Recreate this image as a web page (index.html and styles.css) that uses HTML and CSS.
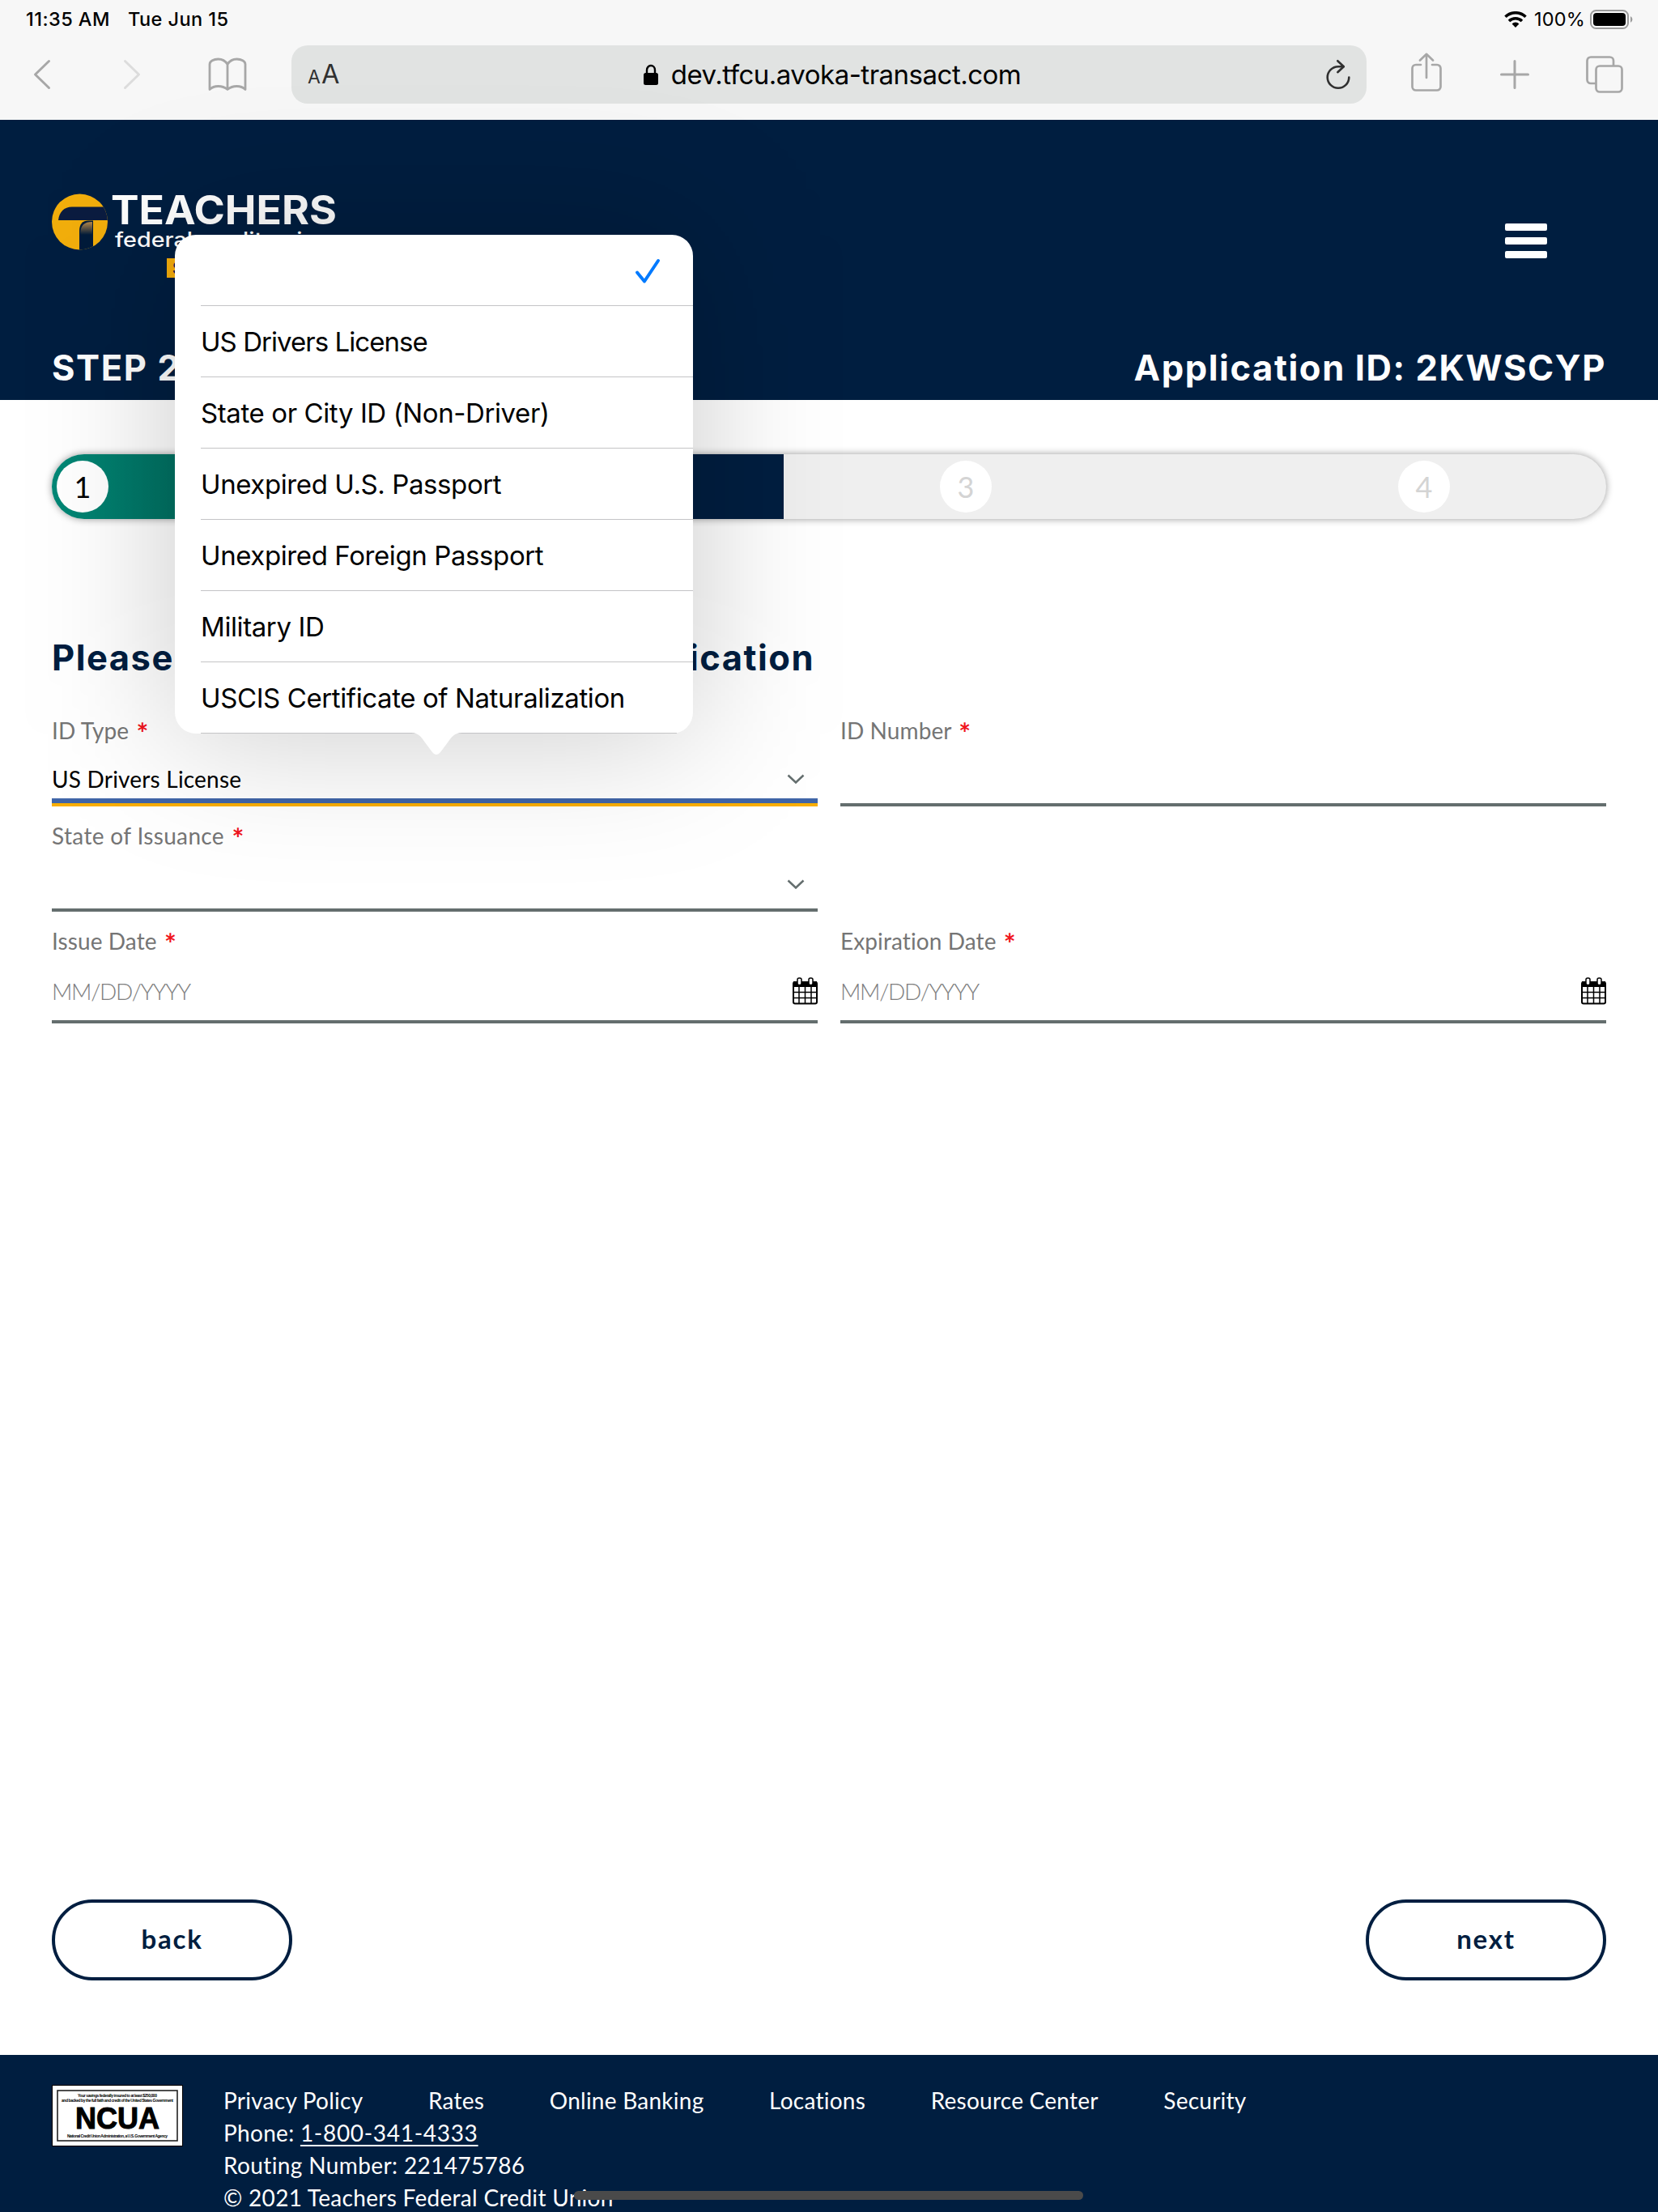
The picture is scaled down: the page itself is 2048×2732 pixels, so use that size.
FILE: index.html
```html
<!DOCTYPE html>
<html lang="en">
<head>
<meta charset="utf-8">
<title>Teachers Federal Credit Union - Application</title>
<link rel="stylesheet" href="styles.css">
</head>
<body>
<div class="browser">
  <div class="status">
    <div class="status-left"><span class="time">11:35 AM</span><span>Tue Jun 15</span></div>
    <div class="status-right">
      <svg class="wifi" width="28" height="20" viewBox="0 0 28 20" fill="none" stroke="#000" stroke-width="3.6"><path d="M1.5 6.8a18 18 0 0 1 25 0"/><path d="M6 12a11.5 11.5 0 0 1 16 0"/><path d="M14 20l-4.4-4.6a6.2 6.2 0 0 1 8.8 0z" fill="#000" stroke="none"/></svg>
      <span class="pct">100%</span>
      <svg width="54" height="24" viewBox="0 0 54 24"><rect x="1" y="1" width="46" height="22" rx="6.5" fill="none" stroke="#9b9b9b" stroke-width="2"/><rect x="4" y="4" width="40" height="16" rx="4" fill="#000"/><path d="M50 8a4.5 4.5 0 0 1 0 8z" fill="#9b9b9b"/></svg>
    </div>
  </div>
  <div class="toolbar">
    <svg class="ic-back" width="24" height="40" viewBox="0 0 24 40" fill="none" stroke="#a7a7a7" stroke-width="3" stroke-linecap="round" stroke-linejoin="round"><path d="M20.500 3.500L3.500 20l17 16.500"/></svg>
    <svg class="ic-fwd" width="24" height="40" viewBox="0 0 24 40" fill="none" stroke="#dcdcdc" stroke-width="3" stroke-linecap="round" stroke-linejoin="round"><path d="M3.500 3.500L20.500 20l-17 16.500"/></svg>
    <svg class="ic-book" width="48" height="42" viewBox="0 0 48 42" fill="none" stroke="#a7a7a7" stroke-width="2.800" stroke-linejoin="round"><path d="M24 8.500C21 3.500 16.500 2 12.500 2 7 2 2 4.500 2 8.500v31c3-3 6-4 10.500-4S21 37 24 39.500c3-2.500 7-4 11.500-4s7.500 1 10.500 4v-31C46 4.500 41 2 35.500 2 31.500 2 27 3.500 24 8.500zM24 8.500v31"/></svg>
    <div class="url">
      <span class="aa"><span class="aa-small">A</span>A</span>
      <div class="address">
        <svg width="18" height="26" viewBox="0 0 18 26"><path d="M4 12V7.500a5 5.500 0 0 1 10 0V12" fill="none" stroke="#000" stroke-width="2.400"/><rect y="11" width="18" height="15" rx="2.500"/></svg>
        <span>dev.tfcu.avoka-transact.com</span>
      </div>
      <svg class="ic-reload" width="30" height="38" viewBox="0 0 30 38" fill="none" stroke="#303030" stroke-width="2.600" stroke-linecap="round" stroke-linejoin="round"><path d="M28.300 22.500A13.300 13.300 0 1 1 15 9.200h6.500"/><path d="M14.300 2.200l7.500 7-7.500 7"/></svg>
    </div>
    <svg class="ic-share" width="38" height="48" viewBox="0 0 38 48" fill="none" stroke="#a7a7a7" stroke-width="2.700" stroke-linecap="round" stroke-linejoin="round"><path d="M12 15H6a4.500 4.500 0 0 0-4.500 4.500V42A4.500 4.500 0 0 0 6 46.500h26a4.500 4.500 0 0 0 4.500-4.500V19.500A4.500 4.500 0 0 0 32 15h-6M19 31V2M11 9.500L19 1.800l8 7.700"/></svg>
    <svg class="ic-plus" width="36" height="36" viewBox="0 0 36 36" fill="none" stroke="#a7a7a7" stroke-width="3" stroke-linecap="round"><path d="M18 1.500v33M1.500 18h33"/></svg>
    <svg class="ic-tabs" width="46" height="46" viewBox="0 0 46 46" fill="none" stroke="#a7a7a7" stroke-width="2.700"><rect x="12.500" y="12.500" width="32" height="32" rx="4.500"/><path d="M12.500 34H6a4.500 4.500 0 0 1-4.500-4.500V6A4.500 4.500 0 0 1 6 1.500h23.500A4.500 4.500 0 0 1 34 6v6.500"/></svg>
  </div>
</div>

<header class="site-header">
  <div class="brand-row">
    <svg class="logo" width="356" height="110" viewBox="0 0 356 110">
      <defs>
        <linearGradient id="stem" x1="0" y1="0" x2="0" y2="1"><stop offset="0" stop-color="#b5874a"/><stop offset="1" stop-color="#001b3a"/></linearGradient>
        <clipPath id="disc"><circle cx="34.500" cy="35" r="34.500"/></clipPath>
      </defs>
      <g clip-path="url(#disc)">
        <rect width="70" height="70" fill="#f2ae0c"/>
        <path d="M8 33c1-10 7-16.500 17-16.500h45V33z" fill="#0b1c40"/>
        <path d="M34 70V46c0-8 4-12.500 11-12.500h6V70z" fill="#001b3a"/>
        <path d="M35 51c0-12 5-16 15-16v16z" fill="url(#stem)"/>
      </g>
      <text x="73" y="37.500" class="logo-name" textLength="279" lengthAdjust="spacingAndGlyphs">TEACHERS</text>
      <text x="78" y="66" class="logo-sub" textLength="266" lengthAdjust="spacingAndGlyphs">federal credit union</text>
      <rect x="142" y="80" width="208" height="24" fill="#f5ad0b"/>
      <text x="149" y="100" class="logo-tag" textLength="194" lengthAdjust="spacingAndGlyphs">SMALL BUSINESS</text>
    </svg>
    <svg class="menu" width="52" height="44" viewBox="0 0 52 44" fill="#fff"><rect width="52" height="9" rx="2"/><rect y="17" width="52" height="9" rx="2"/><rect y="34" width="52" height="9" rx="2"/></svg>
  </div>
  <div class="step-row"><h1>STEP 2</h1><h1 class="app-id">Application ID: 2KWSCYP</h1></div>
</header>

<main>
  <ol class="progress">
    <li class="seg done"><span class="dot">1</span></li>
    <li class="seg current"><span class="dot">2</span></li>
    <li class="seg"><span class="dot">3</span></li>
    <li class="seg"><span class="dot">4</span></li>
  </ol>
  <h2><span>Please provide your</span><span>identification</span></h2>
  <form class="fields">
    <div class="field focused"><label>ID Type <b>*</b></label><div class="control"><span>US Drivers License</span><svg class="chev" width="22" height="12" viewBox="0 0 22 12"><path d="M1.500 1.500L11 10.500l9.500-9"/></svg></div></div>
    <div class="field"><label>ID Number <b>*</b></label><div class="control"></div></div>
    <div class="field"><label class="wide">State of Issuance <b>*</b></label><div class="control"><span></span><svg class="chev" width="22" height="12" viewBox="0 0 22 12"><path d="M1.500 1.500L11 10.500l9.500-9"/></svg></div></div>
    <div></div>
    <div class="field date"><label>Issue Date <b>*</b></label><div class="control"><span class="ph">MM/DD/YYYY</span><svg class="cal" width="31" height="34" viewBox="0 0 31 34"><rect x="1" y="6" width="29" height="26.500" rx="2" fill="#fff" stroke="#000" stroke-width="2"/><path d="M1 5h29v7H1z"/><path d="M8 12v20M15.500 12v20M23 12v20M1 18.500h29M1 25.500h29" stroke="#000" stroke-width="1.500"/><rect x="6" y="1" width="5" height="8.500" rx="2" fill="#fff" stroke="#000" stroke-width="1.500"/><rect x="20" y="1" width="5" height="8.500" rx="2" fill="#fff" stroke="#000" stroke-width="1.500"/></svg></div></div>
    <div class="field date"><label>Expiration Date <b>*</b></label><div class="control"><span class="ph">MM/DD/YYYY</span><svg class="cal" width="31" height="34" viewBox="0 0 31 34"><rect x="1" y="6" width="29" height="26.500" rx="2" fill="#fff" stroke="#000" stroke-width="2"/><path d="M1 5h29v7H1z"/><path d="M8 12v20M15.500 12v20M23 12v20M1 18.500h29M1 25.500h29" stroke="#000" stroke-width="1.500"/><rect x="6" y="1" width="5" height="8.500" rx="2" fill="#fff" stroke="#000" stroke-width="1.500"/><rect x="20" y="1" width="5" height="8.500" rx="2" fill="#fff" stroke="#000" stroke-width="1.500"/></svg></div></div>
  </form>
  <div class="actions"><button>back</button><button>next</button></div>
</main>

<footer>
  <svg class="ncua" width="162" height="76" viewBox="0 0 162 76">
    <rect x=".5" y=".5" width="161" height="75" fill="#fff" stroke="#000"/>
    <rect x="7" y="7" width="148" height="62" fill="none" stroke="#222" stroke-width="1.600"/>
    <text x="81" y="15" class="ncua-fine" textLength="98">Your savings federally insured to at least $250,000</text>
    <text x="81" y="20.500" class="ncua-fine" textLength="138">and backed by the full faith and credit of the United States Government</text>
    <text x="81" y="53.500" class="ncua-name" textLength="104" lengthAdjust="spacingAndGlyphs">NCUA</text>
    <text x="81" y="65" class="ncua-fine" textLength="124">National Credit Union Administration, a U.S. Government Agency</text>
  </svg>
  <div class="legal">
    <nav><a>Privacy Policy</a><a>Rates</a><a>Online Banking</a><a>Locations</a><a>Resource Center</a><a>Security</a></nav>
    <p class="phone">Phone: <u>1-800-341-4333</u></p>
    <p class="routing">Routing Number: 221475786</p>
    <p class="copy">© 2021 Teachers Federal Credit Union</p>
  </div>
</footer>

<div class="picker">
  <div class="option selected"><svg width="32" height="32" viewBox="0 0 32 32" fill="none" stroke="#007aff" stroke-width="4" stroke-linecap="round" stroke-linejoin="round"><path d="M3 17.500l9 11L29 3"/></svg></div>
  <div class="option tight">US Drivers License</div>
  <div class="option">State or City ID (Non-Driver)</div>
  <div class="option">Unexpired U.S. Passport</div>
  <div class="option">Unexpired Foreign Passport</div>
  <div class="option">Military ID</div>
  <div class="option">USCIS Certificate of Naturalization</div>
  <svg class="arrow" width="64" height="27" viewBox="0 0 64 27"><path d="M0 0c10 0 13 5 18 12l9 12c3.500 4 6.500 4 10 0l9-12C51 5 54 0 64 0z" fill="#fff"/></svg>
</div>
<div class="home-indicator"></div>
</body>
</html>
```

FILE: styles.css
```css
* { box-sizing: border-box; }
body { margin: 0; width: 2048px; height: 2732px; overflow: hidden; position: relative; display: flex; flex-direction: column; background: #fff; font-family: "Lato", sans-serif; color: #000; }
svg { display: block; flex: none; }
h1, h2, p, ol { margin: 0; padding: 0; }

.browser { height: 148px; flex: none; background: #f7f7f7; font-family: "Inter", sans-serif; }
.status { height: 48px; padding: 0 30px 0 32px; display: flex; align-items: center; justify-content: space-between; font-size: 23.500px; font-weight: 500; line-height: 48px; }
.status-left, .status-right { display: flex; align-items: center; }
.status-left { gap: 22px; letter-spacing: .45px; }
.pct { margin: 0 6px 0 9px; letter-spacing: .2px; font-weight: 400; }
.toolbar { height: 88px; display: flex; align-items: center; padding-left: 40px; }
.ic-fwd { margin-left: 87px; }
.ic-book { margin-left: 82px; }
.url { margin-left: 55px; width: 1328px; height: 72px; border-radius: 20px; background: #e1e3e2; display: flex; align-items: center; justify-content: space-between; padding: 0 20px; }
.aa { width: 60px; font-size: 32.500px; color: #303030; line-height: 40px; padding-top: 3px; }
.aa-small { font-size: 23px; margin-right: 1px; }
.address { display: flex; align-items: center; gap: 16px; margin-right: 22px; font-size: 33px; letter-spacing: -.5px; }
.ic-share { margin: -6px 0 0 55px; }
.ic-plus { margin-left: 72px; }
.ic-tabs { margin-left: 70px; }

.site-header { height: 346px; flex: none; background: #001e40; color: #fff; padding: 91px 64px 0; font-family: "Inter", sans-serif; }
.brand-row { display: flex; justify-content: space-between; height: 189px; }
.logo-name { font: 700 49px "Inter", sans-serif; fill: #fff; }
.logo-sub { font: 500 25px "Inter", sans-serif; fill: #fff; }
.logo-tag { font: 700 22px "Inter", sans-serif; fill: #0b1c40; }
.menu { margin: 37px 73px 0 0; }
.step-row { display: flex; justify-content: space-between; }
h1 { font-size: 43.500px; line-height: 52px; font-weight: 700; letter-spacing: 1.600px; }

main { flex: none; height: 2044px; padding: 67px 64px 0; display: flex; flex-direction: column; }
.progress { height: 80px; display: grid; grid-template-columns: 339px 565px 566px 1fr; border-radius: 40px; background: #efefef; overflow: hidden; list-style: none; box-shadow: 0 0 10px rgba(0,0,0,.4); }
.seg { display: flex; align-items: center; padding-left: 193px; }
.dot { width: 64px; height: 64px; border-radius: 50%; background: #fff; color: #d4d4d4; font-size: 36px; display: flex; align-items: center; justify-content: center; }
.done { background: linear-gradient(90deg, #008876, #006e60 50%); padding-left: 6px; }
.current { background: #001e40; }
.done .dot, .current .dot { color: #000; }
h2 { display: flex; justify-content: space-between; margin-top: 141px; width: 942px; font: 700 43.500px/60px "Inter", sans-serif; letter-spacing: 1.500px; color: #001e40; }

.fields { margin-top: 24px; display: grid; grid-template-columns: 946px 946px; column-gap: 28px; grid-template-rows: 130px 130px 138px; }
.field { display: flex; flex-direction: column; justify-content: space-between; height: 130px; border-bottom: 4px solid #646e6e; }
.field.date { height: 138px; }
label { font-size: 28px; line-height: 38px; padding-top: 17px; color: #757575; letter-spacing: .1px; }
label.wide { letter-spacing: .35px; }
label b { color: #f0141c; margin-left: 2px; font-size: 35px; line-height: 0; vertical-align: -5px; }
.control { height: 64px; padding-top: 4px; display: flex; justify-content: space-between; align-items: center; font-size: 28px; letter-spacing: .2px; }
.date .control { height: 76px; }
.chev { margin-right: 16px; fill: none; stroke: #646e6e; stroke-width: 2.500px; }
.ph { color: #808080; font-weight: 300; letter-spacing: -1.350px; }
.focused { border-bottom-color: #f9ae00; }
.focused .control { box-shadow: inset 0 -6px #4065a8; }

.actions { margin-top: auto; margin-bottom: 92px; display: flex; justify-content: space-between; }
button { width: 297px; height: 100px; border: 4px solid #001e40; border-radius: 50px; background: #fff; color: #001e40; font: 700 33px "Lato", sans-serif; letter-spacing: 1.800px; padding: 0 0 4px; }

footer { flex: 1; background: #001e40; color: #fff; padding: 37px 64px 0; display: flex; gap: 50px; font-size: 28px; line-height: 40px; }
.legal { white-space: nowrap; margin-top: -1px; }
nav { display: flex; gap: 80.600px; letter-spacing: .25px; }
.phone { letter-spacing: .3px; }
.phone u { letter-spacing: .7px; }
.routing { letter-spacing: .38px; }
.copy { letter-spacing: .3px; }
.ncua-fine { font: 700 5px "Liberation Sans", sans-serif; text-anchor: middle; }
.ncua-name { font: 700 37px "Liberation Sans", sans-serif; text-anchor: middle; stroke: #000; }
u { text-underline-offset: 4px; text-decoration-thickness: 2px; }

.picker { position: absolute; z-index: 1; left: 216px; top: 290px; width: 640px; height: 616px; font: 400 33px/88px "Inter", sans-serif; }
.picker::before, .picker::after { content: ""; position: absolute; inset: 0; z-index: -1; border-radius: 26px; background: #fff; }
.picker::before { background: rgba(0,0,0,.21); filter: blur(88px); }
.option { height: 88px; margin-left: 32px; border-bottom: 1px solid #c4c4c6; letter-spacing: -.4px; }
.option.tight { letter-spacing: -.95px; }
.option:nth-child(7) { margin-right: 20px; }
.selected { display: flex; justify-content: flex-end; padding: 29px 40px 0 0; }
.arrow { position: absolute; left: 291px; top: 615px; }
.home-indicator { position: absolute; left: 709px; top: 2706px; width: 629px; height: 11px; border-radius: 6px; background: #4a4a4a; }
```
